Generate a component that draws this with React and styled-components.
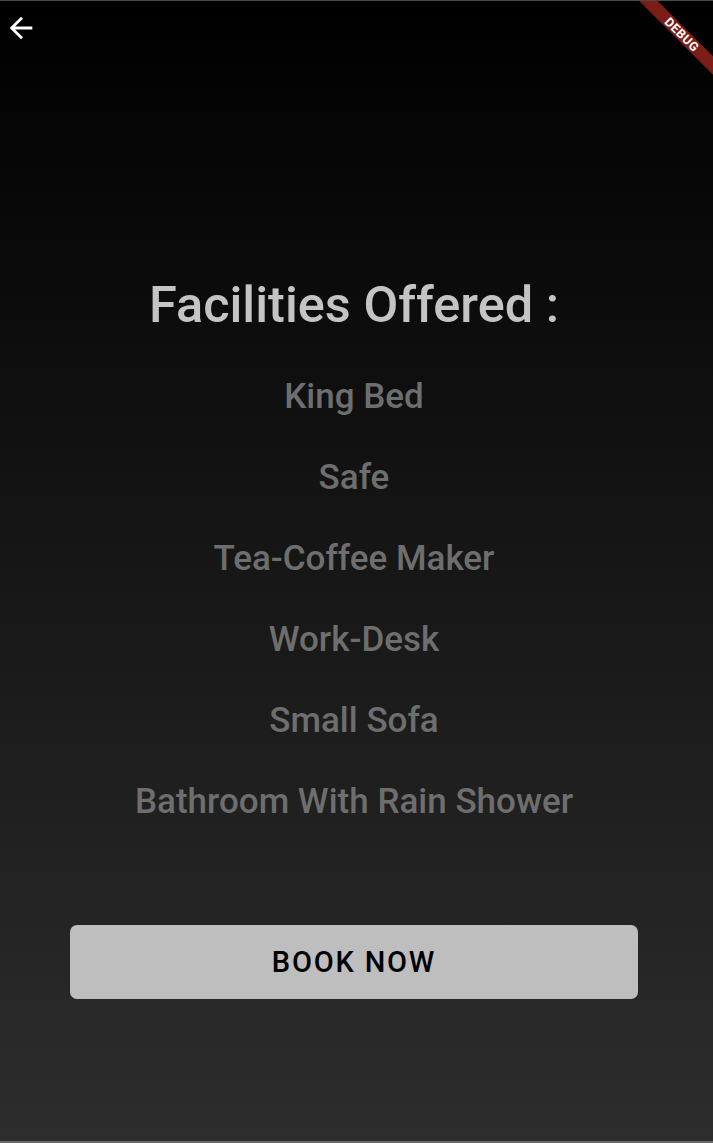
import styled, { createGlobalStyle } from 'styled-components';

const GlobalStyle = createGlobalStyle`
  html, body {
    margin: 0;
    padding: 0;
    background: #000;
  }
  * {
    box-sizing: border-box;
  }
`

const facilities = [
  "King Bed",
  "Safe",
  "Tea-Coffee Maker",
  "Work-Desk",
  "Small Sofa",
  "Bathroom With Rain Shower"
]

function App() {
  return (
    <>
      <GlobalStyle />
      <Screen>
        <TopBar>
          <BackButton aria-label="back">
            <svg width="34" height="34" viewBox="0 0 24 24">
              <path d="M20 11H7.83l5.59-5.59L12 4l-8 8 8 8 1.41-1.41L7.83 13H20v-2z" fill="#fff" />
            </svg>
          </BackButton>
        </TopBar>
        <Content>
          <Title>Facilities Offered :</Title>
          <List>
            {facilities.map((item) => <Item key={item}>{item}</Item>)}
          </List>
          <BookButton>BOOK NOW</BookButton>
        </Content>
        <DebugBanner>DEBUG</DebugBanner>
      </Screen>
    </>
  )
}

const Screen = styled.div`
  position: relative;
  height: 1143px;
  overflow: hidden;
  display: flex;
  flex-direction: column;
  border-top: 1px solid #4a4a4a;
  border-bottom: 2px solid #6a6a6a;
  background: linear-gradient(to bottom, #000000 0%, #2d2d2d 100%);
  font-family: Roboto, "Liberation Sans", sans-serif;
`

const TopBar = styled.div`
  display: flex;
  align-items: center;
  height: 52px;
  padding-left: 4px;
`

const BackButton = styled.div`
  display: flex;
  width: 34px;
  height: 34px;
  margin-top: 1px;
`

const Content = styled.div`
  display: flex;
  flex-direction: column;
  align-items: center;
  padding-top: 222px;
  padding-right: 5px;
`

const Title = styled.div`
  color: #c4c4c4;
  font-size: 50.5px;
  font-weight: 500;
  line-height: 60px;
`

const List = styled.div`
  display: flex;
  flex-direction: column;
  align-items: center;
  gap: 37px;
  margin-top: 40px;
`

const Item = styled.div`
  color: #6e6e6e;
  font-size: 35px;
  font-weight: 500;
  line-height: 44px;
`

const BookButton = styled.div`
  display: flex;
  align-items: center;
  justify-content: center;
  width: 568px;
  height: 74px;
  margin-top: 101px;
  border-radius: 7px;
  background: #bebebe;
  color: #000;
  font-size: 29px;
  font-weight: 500;
  letter-spacing: 1.8px;
`

const DebugBanner = styled.div`
  position: absolute;
  top: 27px;
  right: -39px;
  width: 140px;
  height: 13px;
  transform: rotate(45deg);
  background: #7c1d18;
  color: #fff;
  font-size: 12.5px;
  font-weight: 700;
  line-height: 13px;
  text-align: center;
  letter-spacing: 0.5px;
`

export default App;
